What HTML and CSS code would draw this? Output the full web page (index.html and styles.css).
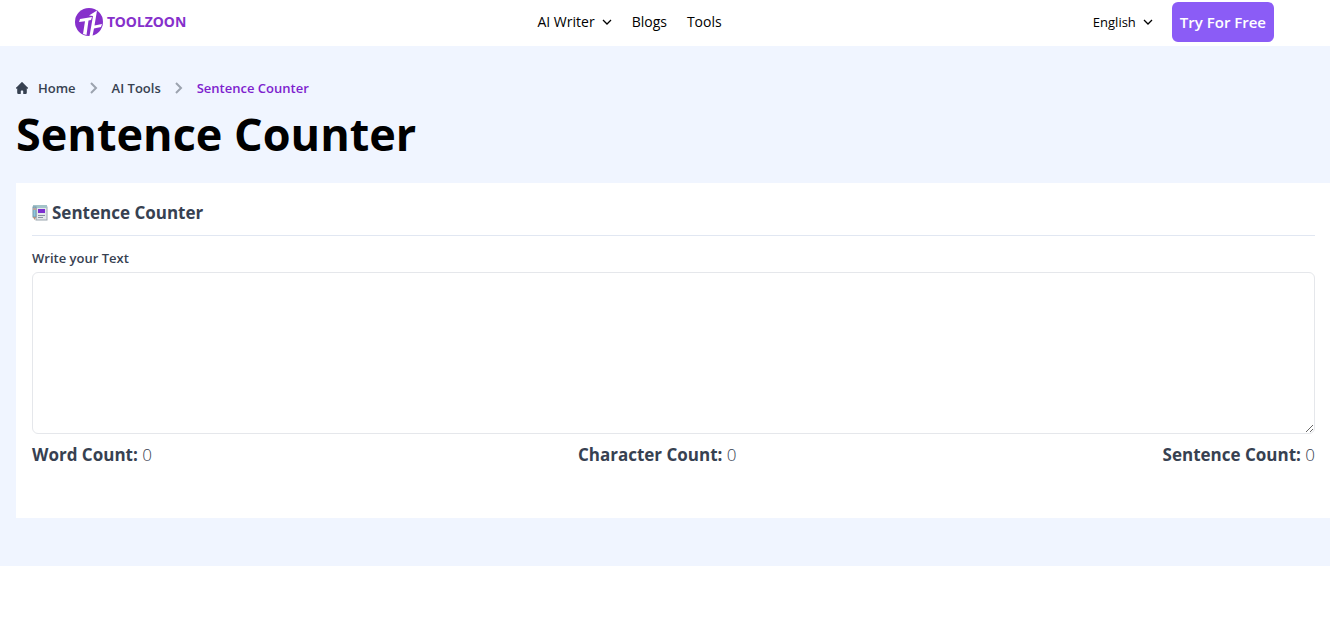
FILE: index.html
```html
<!DOCTYPE html>
<html lang="en">
<head>
  <meta charset="UTF-8" />
  <meta name="viewport" content="width=device-width, initial-scale=1.0" />
  <title>Sentence Counter</title>
  <link rel="stylesheet" href="styles.css">
</head>
<body>
  <header class="site-header">
    <a class="logo" href="#">
      <svg class="logo-mark" viewBox="0 0 28 28" aria-hidden="true">
        <circle cx="14" cy="14" r="14" fill="#8630cb" />
        <path d="M5 11 L17 9 L16 12 L13.500 12.500 L11.500 27 L8 26 L10 13.200 L4 14 Z" fill="#fff" />
        <path d="M14 7.500 L22 2.500 L19.500 17.500 L27 16 L26 19 L19 20.500 L17.500 28 L14.500 28 L18 8 Z" fill="#fff" />
      </svg>
      <span>TOOLZOON</span>
    </a>

    <nav class="main-nav">
      <button class="menu-button" type="button">AI Writer
        <svg class="chevron" viewBox="0 0 10 6" aria-hidden="true"><path d="M1 1l4 4 4-4" /></svg>
      </button>
      <a href="#">Blogs</a>
      <a href="#">Tools</a>
    </nav>

    <div class="header-actions">
      <button class="menu-button language" type="button">English
        <svg class="chevron" viewBox="0 0 10 6" aria-hidden="true"><path d="M1 1l4 4 4-4" /></svg>
      </button>
      <a class="try-button" href="#">Try For Free</a>
    </div>
  </header>

  <main class="page">
    <nav class="breadcrumb" aria-label="Breadcrumb">
      <a class="home-link" href="#">
        <svg class="home-icon" viewBox="0 0 20 20" aria-hidden="true"><path d="m19.707 9.293-2-2-7-7a1 1 0 0 0-1.414 0l-7 7-2 2a1 1 0 0 0 1.414 1.414L2 10.414V18a2 2 0 0 0 2 2h3a1 1 0 0 0 1-1v-4a1 1 0 0 1 1-1h2a1 1 0 0 1 1 1v4a1 1 0 0 0 1 1h3a2 2 0 0 0 2-2v-7.586l.293.293a1 1 0 0 0 1.414-1.414Z" /></svg>
        Home
      </a>
      <svg class="separator" viewBox="0 0 8 12" aria-hidden="true"><path d="M1 1l5 5-5 5" /></svg>
      <a href="#">AI Tools</a>
      <svg class="separator" viewBox="0 0 8 12" aria-hidden="true"><path d="M1 1l5 5-5 5" /></svg>
      <a class="current" href="#" aria-current="page">Sentence Counter</a>
    </nav>

    <h1>Sentence Counter</h1>

    <section class="card">
      <h2>
        <svg class="doc-icon" viewBox="0 0 16 16" aria-hidden="true">
          <rect x="4" y="2" width="11" height="13" fill="#e3e7eb" stroke="#9aa5ae" />
          <rect x="1" y="0" width="14" height="3" fill="#a3c3c9" />
          <rect x="6" y="4" width="7" height="4" fill="#7c2fd0" />
          <path d="M6 10.5h7M6 12.5h5" stroke="#8993a0" />
          <rect x="1" y="2" width="3" height="10" fill="#8cc5df" stroke="#7897a6" />
          <path d="M1 12h3l-1.500 3z" fill="#b99079" />
          <rect x="1" y="3" width="3" height="2" fill="#b9a49f" />
        </svg>
        Sentence Counter
      </h2>
      <label for="text-input">Write your Text</label>
      <textarea id="text-input"></textarea>
      <div class="counts">
        <p><strong>Word Count:</strong> <span id="word-count">0</span></p>
        <p><strong>Character Count:</strong> <span id="character-count">0</span></p>
        <p><strong>Sentence Count:</strong> <span id="sentence-count">0</span></p>
      </div>
    </section>
  </main>

  <script>
    const textInput = document.getElementById("text-input");

    function updateCounts() {
      const text = textInput.value;
      const words = text.split(/\s+/).filter((word) => word);
      const sentences = text.split(/[.!?]+/).filter((sentence) => sentence.trim());

      document.getElementById("word-count").textContent = words.length;
      document.getElementById("character-count").textContent = text.length;
      document.getElementById("sentence-count").textContent = sentences.length;
    }

    textInput.addEventListener("input", updateCounts);
  </script>
</body>
</html>
```
FILE: styles.css
```css
* {
  box-sizing: border-box;
}

body {
  margin: 0;
  font-family: "Segoe UI", "Open Sans", "Noto Sans", sans-serif;
  font-size: 13px;
  line-height: 20px;
  color: #374151;
  background: #fff;
}

a {
  color: inherit;
  text-decoration: none;
}

/* Header */
.site-header {
  display: flex;
  align-items: center;
  justify-content: space-between;
  min-height: 46px;
  padding: 2px 56px 4px 75px;
  color: #000;
}

.logo {
  display: flex;
  align-items: center;
  gap: 4px;
  font-family: "Noto Sans", sans-serif;
  font-size: 14px;
  font-weight: 700;
  color: #8630cb;
}

.logo-mark {
  width: 28px;
  height: 28px;
}

.main-nav {
  display: flex;
  align-items: center;
  gap: 20px;
  font-size: 14px;
  font-weight: 500;
}

.menu-button {
  display: flex;
  align-items: center;
  gap: 7px;
  padding: 0;
  border: 0;
  background: none;
  font: inherit;
  color: inherit;
  cursor: pointer;
}

.chevron {
  width: 10px;
  height: 6px;
  fill: none;
  stroke: currentColor;
  stroke-width: 1.3;
}

.header-actions {
  display: flex;
  align-items: center;
  gap: 19px;
  padding-left: 20px;
}

.try-button {
  padding: 10px 8px;
  border-radius: 6px;
  background: #8b5cf6;
  font-size: 15px;
  font-weight: 600;
  color: #fff;
}

/* Tool page */
.page {
  padding: 32px 0 48px 16px;
  background: #f0f5ff;
}

.breadcrumb {
  display: flex;
  align-items: center;
  gap: 14px;
  font-weight: 600;
}

.home-link {
  display: flex;
  align-items: center;
  gap: 10px;
}

.home-icon {
  width: 12px;
  height: 12px;
  fill: #374151;
}

.separator {
  width: 8px;
  height: 12px;
  fill: none;
  stroke: #9ca3af;
  stroke-width: 2;
}

.current {
  color: #7e22ce;
}

h1 {
  margin: 6px 0 20px;
  font-size: 45px;
  font-weight: 700;
  line-height: 59px;
  color: #000;
}

.card {
  padding: 16px 15px 48px 16px;
  background: #fff;
}

h2 {
  display: flex;
  align-items: center;
  gap: 4px;
  margin: 0 0 12px;
  padding-bottom: 8px;
  border-bottom: 1px solid #e1e7f2;
  font-size: 17px;
  font-weight: 700;
  line-height: 28px;
}

.doc-icon {
  width: 16px;
  height: 16px;
}

label {
  display: block;
  margin-bottom: 4px;
  font-weight: 600;
}

textarea {
  display: block;
  width: 100%;
  height: 162px;
  padding: 8px;
  border: 1px solid #e5e7eb;
  border-radius: 6px;
  font: inherit;
  color: inherit;
}

.counts {
  display: flex;
  justify-content: space-between;
  padding: 7px 0 1px;
  font-size: 17px;
  font-weight: 300;
  line-height: 28px;
}

.counts p {
  margin: 0;
}

.counts strong {
  font-weight: 700;
}
```
